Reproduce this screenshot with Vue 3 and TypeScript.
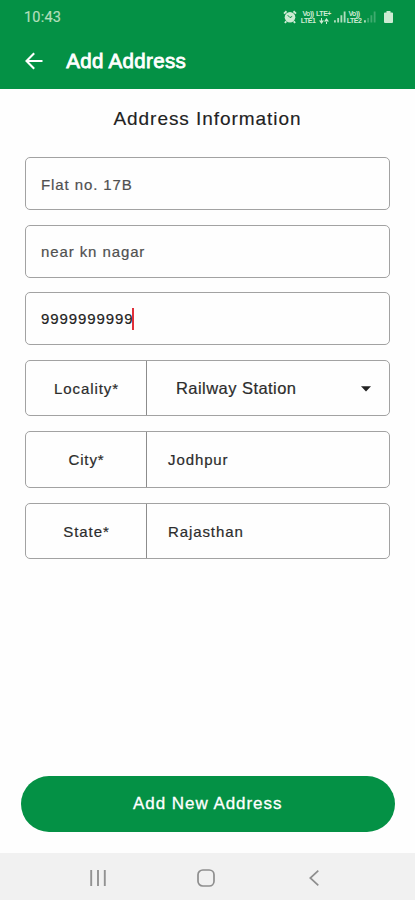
<script setup lang="ts">
import { ref } from 'vue'

interface Row {
  label: string
  value: string
  select?: boolean
}

const lines = ref<string[]>(['Flat no. 17B', 'near kn nagar', '9999999999'])
const activeLine = 2
const rows = ref<Row[]>([
  { label: 'Locality*', value: 'Railway Station', select: true },
  { label: 'City*', value: 'Jodhpur' },
  { label: 'State*', value: 'Rajasthan' },
])
</script>

<template>
  <div class="screen">
    <header class="header">
      <div class="status">
        <span class="clock">10:43</span>
        <div class="indicators">
          <svg class="alarm" width="14" height="14" viewBox="0 0 14 14">
            <circle cx="7" cy="7.3" r="5.3" fill="currentColor" />
            <path d="M1 3.6 3.5 1.3M13 3.6 10.5 1.3M3.2 11.2 2 13M10.8 11.2 12 13" stroke="currentColor" stroke-width="1.9" />
            <path d="M4.7 5.2 7 7.6 9.2 6.4" fill="none" stroke="#049145" stroke-width="1" />
          </svg>
          <div class="net sim1"><span>Vo))</span><span>LTE1</span></div>
          <div class="net lte">
            <span>LTE+</span>
            <svg width="10" height="6" viewBox="0 0 10 6"><path d="M0 2.5h5L2.5 6zM5 3.5h5L7.5 0zM2 0h1v3H2zM7 3h1v3H7z" fill="currentColor" /></svg>
          </div>
          <svg class="bars" width="12" height="12" viewBox="0 0 13 12" fill="currentColor">
            <path d="M0 9.5h2V12H0zM3.5 7h2v5h-2zM7 4h2v8H7zM10.5 0h2v12h-2z" />
          </svg>
          <div class="net sim2"><span>Vo))</span><span>LTE2</span></div>
          <svg class="bars2" width="12" height="12" viewBox="0 0 13 12" fill="currentColor">
            <path d="M0 9.5h2V12H0z" />
            <path opacity=".35" d="M3.5 7h2v5h-2zM7 4h2v8H7zM10.5 0h2v12h-2z" />
          </svg>
          <svg class="battery" width="9" height="12" viewBox="0 0 9 13" preserveAspectRatio="none" fill="currentColor">
            <path d="M2.5 0h4v1.5H8q1 0 1 1V12q0 1-1 1H1q-1 0-1-1V2.5q0-1 1-1h1.5z" />
          </svg>
        </div>
      </div>
      <div class="toolbar">
        <svg class="back" width="18" height="18" viewBox="0 0 18 18" fill="none" stroke="#fff" stroke-width="2.1">
          <path d="M17.5 9H1.8M9.2 1.2 1.5 9l7.7 7.8" />
        </svg>
        <h1 class="title">Add Address</h1>
      </div>
    </header>

    <main class="form">
      <h2 class="heading">Address Information</h2>
      <div class="lines">
        <div v-for="(line, i) in lines" :key="i" class="box line" :class="{ active: i === activeLine }">
          <span>{{ line }}</span><i v-if="i === activeLine" class="caret"></i>
        </div>
      </div>
      <div class="rows">
        <div v-for="row in rows" :key="row.label" class="box row">
          <div class="label">{{ row.label }}</div>
          <div class="value" :class="{ select: row.select }">
            <span>{{ row.value }}</span>
            <svg v-if="row.select" width="10" height="6" viewBox="0 0 10 6"><path d="M0 .3h10L5 5.6z" fill="#222" /></svg>
          </div>
        </div>
      </div>
      <button class="submit" type="button">Add New Address</button>
    </main>

    <nav class="nav">
      <svg width="16" height="16" viewBox="0 0 16 16" stroke="#929292" stroke-width="1.9"><path d="M1.2 0v16M8 0v16M14.8 0v16" /></svg>
      <svg width="18" height="18" viewBox="0 0 18 18" fill="none" stroke="#8e8e8e" stroke-width="1.7"><rect x="1" y="1" width="16" height="16" rx="4.8" /></svg>
      <svg class="prev" width="10" height="16" viewBox="0 0 10 16" fill="none" stroke="#8e8e8e" stroke-width="1.7"><path d="M9.3.7 1.3 8l8 7.3" /></svg>
    </nav>
  </div>
</template>

<style>
body {
  margin: 0;
  background: #fefefe;
}
</style>

<style scoped>
.screen {
  width: 415px;
  height: 900px;
  display: flex;
  flex-direction: column;
  overflow: hidden;
  background: #fefefe;
  font-family: "Liberation Sans", Arial, sans-serif;
  color: #2c2c2c;
}
.header {
  height: 88.5px;
  flex: none;
  background: #049145;
}
.status {
  height: 33px;
  padding: 0 22px 0 24px;
  display: flex;
  align-items: center;
  justify-content: space-between;
  color: #cdebd3;
}
.clock {
  padding-top: 1px;
  font-family: Roboto, sans-serif;
  font-size: 14.5px;
  letter-spacing: 0.2px;
  color: #b3dfbb;
  -webkit-text-stroke: 0.2px #b3dfbb;
}
.indicators {
  display: flex;
  align-items: center;
}
.alarm {
  margin-right: 3px;
}
.net {
  display: flex;
  flex-direction: column;
  align-items: center;
  font-size: 7px;
  line-height: 7px;
  font-weight: bold;
  letter-spacing: -0.5px;
}
.sim1,
.sim2 {
  width: 16px;
}
.lte {
  width: 15px;
  margin-right: 3px;
}
.lte svg {
  margin-top: 1px;
}
.bars,
.bars2 {
  opacity: 0.85;
}
.bars2 {
  margin-left: 2px;
}
.battery {
  margin-left: 8px;
}
.toolbar {
  height: 55px;
  padding-left: 25px;
  display: flex;
  align-items: center;
}
.title {
  margin: 0 0 0 23.3px;
  font-size: 20.5px;
  font-weight: 400;
  letter-spacing: 0.32px;
  line-height: 24px;
  color: #fff;
  -webkit-text-stroke: 0.8px #fff;
}
.form {
  flex: 1;
  display: flex;
  flex-direction: column;
  padding: 0 25px;
}
.heading {
  margin: 18.5px 0 0;
  font-size: 19px;
  font-weight: 400;
  line-height: 24px;
  letter-spacing: 0.95px;
  text-align: center;
  color: #222;
  -webkit-text-stroke: 0.15px #222;
}
.box {
  box-sizing: border-box;
  border: 1px solid #a2a2a2;
  border-radius: 5px;
  font-size: 15px;
  letter-spacing: 0.9px;
  -webkit-text-stroke: 0.2px currentColor;
}
.lines {
  margin-top: 26px;
  display: flex;
  flex-direction: column;
  gap: 14.4px;
}
.line {
  height: 53.2px;
  padding: 1px 0 0 15px;
  display: flex;
  align-items: center;
  color: #505050;
}
.line.active {
  padding-top: 0;
  color: #222;
}
.caret {
  width: 2px;
  height: 22px;
  margin-left: -1px;
  background: #e0303a;
}
.rows {
  margin-top: 14.2px;
  display: flex;
  flex-direction: column;
  gap: 15.4px;
}
.row {
  height: 56.3px;
  display: flex;
}
.label {
  width: 121px;
  box-sizing: border-box;
  padding: 1px 0 0 1px;
  display: flex;
  align-items: center;
  justify-content: center;
  border-right: 1px solid #8c8c8c;
}
.value {
  flex: 1;
  padding: 1px 0 0 21px;
  display: flex;
  align-items: center;
  justify-content: space-between;
}
.select {
  padding: 2px 18.5px 0 29px;
  font-size: 16.5px;
  letter-spacing: 0.45px;
}
.submit {
  height: 56.5px;
  margin: auto -4.5px 20.5px -4px;
  padding: 1px 0 0;
  border: 0;
  border-radius: 29px;
  background: #049145;
  color: #fff;
  font-family: inherit;
  font-size: 17px;
  letter-spacing: 0.95px;
  -webkit-text-stroke: 0.3px #fff;
}
.nav {
  height: 47.5px;
  flex: none;
  box-sizing: border-box;
  padding: 3px 0 0 90px;
  display: flex;
  align-items: center;
  gap: 91px;
  background: #f1f1f1;
}
.prev {
  margin-left: 3px;
}
</style>
